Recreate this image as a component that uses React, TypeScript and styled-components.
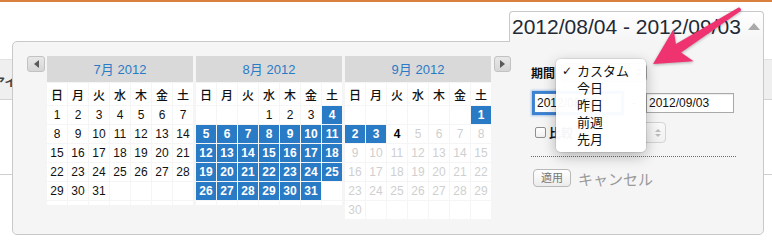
import React from "react";
import styled, { createGlobalStyle } from "styled-components";

const SANS = `"Liberation Sans", Arial, "Noto Sans CJK JP", sans-serif`;

const Global = createGlobalStyle`
  * { box-sizing: border-box; }
  html, body { margin: 0; padding: 0; background: #fff; }
  body { font-family: ${SANS}; color: #111; }
`;

const Page = styled.div`
  position: relative;
  width: 772px;
  height: 247px;
  overflow: hidden;
  background: #fff;
`;

const TopRule = styled.div`
  height: 2px;
  background: #d9803f;
`;

const HeaderSpace = styled.div`
  height: 57px;
`;

const TabBand = styled.div`
  height: 41px;
  background: #efefef;
  border-top: 1px solid #e2e2e2;
  border-bottom: 1px solid #d4d4d4;
  display: flex;
  align-items: center;
  padding-top: 4px;
`;

const BandLabel = styled.span`
  margin-left: -7px;
  font-size: 12px;
  font-weight: bold;
  color: #444;
`;

const ContentSpace = styled.div`
  height: 74px;
`;

const Rule = styled.div`
  height: 1px;
  background: #cfcfcf;
`;

/* ---------- overlay: date range picker ---------- */

const Panel = styled.div`
  position: absolute;
  left: 12px;
  top: 41px;
  width: 752px;
  height: 194px;
  border: 1px solid #c9c9c9;
  border-radius: 5px 0 5px 5px;
  background: #f5f5f5;
  padding: 14px;
  display: flex;
  align-items: flex-start;
  z-index: 1;
`;

const RangeBox = styled.div`
  position: absolute;
  left: 509px;
  top: 11px;
  width: 255px;
  height: 31px;
  border: 1px solid #c9c9c9;
  border-bottom: none;
  border-radius: 4px 4px 0 0;
  background: linear-gradient(#ffffff, #f7f7f7 80%, #f5f5f5);
  display: flex;
  z-index: 2;
`;

const RangeText = styled.div`
  flex: 1;
  padding-left: 2px;
  font-size: 21px;
  line-height: 29px;
  color: #1f2a35;
  white-space: nowrap;
`;

const RangeToggle = styled.div`
  width: 18px;
  display: flex;
  align-items: center;
  justify-content: center;
  padding-bottom: 1px;
  &::before {
    content: "";
    border-left: 6px solid transparent;
    border-right: 6px solid transparent;
    border-bottom: 7px solid #a9a9a9;
  }
`;

const NavButton = styled.div<{ $dir: "prev" | "next" }>`
  flex: none;
  width: ${(p) => (p.$dir === "prev" ? 18 : 17)}px;
  height: 16px;
  margin: ${(p) => (p.$dir === "prev" ? "0 2px 0 0" : "0 0 0 3px")};
  border: 1px solid #c2c2c2;
  border-radius: 3px;
  background: linear-gradient(#e8e8e8, #d6d6d6);
  display: flex;
  align-items: center;
  justify-content: center;
  &::before {
    content: "";
    border-top: 4px solid transparent;
    border-bottom: 4px solid transparent;
    ${(p) =>
      p.$dir === "prev"
        ? "border-right: 5px solid #5a5a5a;"
        : "border-left: 5px solid #5a5a5a;"}
  }
`;

const Months = styled.div`
  display: flex;
  gap: 3px;
`;

const Month = styled.div`
  display: grid;
  grid-template-columns: repeat(7, 20px);
  column-gap: 1px;
  row-gap: 1px;
  align-content: start;
`;

const MonthTitle = styled.div`
  grid-column: 1 / -1;
  height: 26px;
  background: #d9d9d9;
  color: #2a7bc6;
  font-size: 13px;
  display: flex;
  align-items: center;
  justify-content: center;
  padding-bottom: 1px;
`;

const Weekday = styled.div`
  height: 22px;
  background: #fff;
  font-size: 12px;
  font-weight: 500;
  color: #111;
  display: flex;
  align-items: center;
  justify-content: center;
`;

type Kind = "normal" | "selected" | "today" | "disabled" | "empty";

const dayColor: Record<Kind, string> = {
  normal: "#111",
  selected: "#fff",
  today: "#000",
  disabled: "#cfcfcf",
  empty: "#111",
};

const DayCell = styled.div<{ $kind: Kind }>`
  padding: 2px 0;
  line-height: 14px;
  font-size: 12px;
  text-align: center;
  background: ${(p) => (p.$kind === "selected" ? "#2a7bc6" : "#fff")};
  color: ${(p) => dayColor[p.$kind]};
  font-weight: ${(p) => (p.$kind === "selected" || p.$kind === "today" ? "bold" : "normal")};
`;

/* ---------- right-side form ---------- */

const Form = styled.div`
  position: relative;
  margin-left: 20px;
  padding-top: 6px;
  width: 215px;
`;

const Row = styled.div<{ $top?: number; $h: number }>`
  display: flex;
  align-items: center;
  height: ${(p) => p.$h}px;
  margin-top: ${(p) => p.$top ?? 0}px;
`;

const Label = styled.span`
  font-size: 12px;
  font-weight: bold;
  color: #111;
`;

const SelectBox = styled.div<{ $w: number; $ml: number; $disabled?: boolean }>`
  position: relative;
  width: ${(p) => p.$w}px;
  height: ${(p) => (p.$disabled ? 21 : 19)}px;
  margin-left: ${(p) => p.$ml}px;
  border: 1px solid #aaa;
  border-radius: 4px;
  background: linear-gradient(#fff, #ededed);
  opacity: ${(p) => (p.$disabled ? 0.45 : 1)};
`;

const UpDown = styled.span`
  position: absolute;
  right: 4px;
  top: 50%;
  transform: translateY(-50%);
  display: flex;
  flex-direction: column;
  gap: 2px;
  &::before,
  &::after {
    content: "";
    border-left: 3px solid transparent;
    border-right: 3px solid transparent;
  }
  &::before {
    border-bottom: 3px solid #777;
  }
  &::after {
    border-top: 3px solid #777;
  }
`;

const Field = styled.div<{ $focused?: boolean; $ml: number }>`
  width: 88px;
  height: 20px;
  margin-left: ${(p) => p.$ml}px;
  border: 1px solid ${(p) => (p.$focused ? "#4a87cf" : "#a9a9a9")};
  box-shadow: ${(p) =>
    p.$focused ? "0 0 0 2px #3a82d2, 0 0 2px 3px rgba(80,140,215,0.45)" : "inset 0 1px 1px rgba(0,0,0,0.08)"};
  background: #fff;
  font-size: 12px;
  line-height: 18px;
  padding-left: 2px;
  color: #111;
  overflow: hidden;
  white-space: nowrap;
`;

const Dash = styled.span`
  width: 24px;
  text-align: center;
  font-size: 12px;
  color: #333;
`;

const Checkbox = styled.span`
  width: 11px;
  height: 11px;
  margin-left: 4px;
  border: 1px solid #8f8f8f;
  border-radius: 2px;
  background: linear-gradient(#fff, #f0f0f0);
`;

const CheckLabel = styled(Label)`
  margin-left: 3px;
`;

const Divider = styled.div`
  margin-top: 13px;
  width: 205px;
  border-top: 1px dotted #6a6a6a;
`;

const ApplyButton = styled.div`
  width: 38px;
  height: 18px;
  margin-left: 2px;
  border: 1px solid #b9b9b9;
  border-radius: 4px;
  background: linear-gradient(#ffffff, #ececec);
  font-size: 11px;
  line-height: 16px;
  text-align: center;
  color: #777;
`;

const CancelLink = styled.span`
  margin-left: 7px;
  font-size: 15px;
  color: #9a9a9a;
`;

/* ---------- native popup menu ---------- */

const Menu = styled.div`
  position: absolute;
  left: 25px;
  top: 3px;
  width: 90px;
  padding: 4px 0;
  background: rgba(255, 255, 255, 0.96);
  border-radius: 5px;
  box-shadow: 0 4px 14px rgba(0, 0, 0, 0.28), 0 0 0 1px rgba(0, 0, 0, 0.07);
  z-index: 3;
`;

const MenuItem = styled.div<{ $checked?: boolean }>`
  position: relative;
  height: 17px;
  line-height: 17px;
  padding-left: 21px;
  font-size: 13px;
  color: #111;
  &::before {
    content: "${(p) => (p.$checked ? "✓" : "")}";
    position: absolute;
    left: 6px;
    top: 0;
    font-family: "DejaVu Sans", sans-serif;
    font-weight: bold;
    font-size: 12px;
  }
`;

const ArrowSvg = styled.svg`
  position: absolute;
  left: 640px;
  top: 0;
  width: 110px;
  height: 70px;
  z-index: 5;
  filter: drop-shadow(0 1px 1.5px rgba(0, 0, 0, 0.3));
`;

/* ---------- data ---------- */

interface Day {
  n?: number;
  kind: Kind;
}

function buildMonth(startDow: number, days: number, kindOf: (d: number) => Kind): Day[] {
  const cells: Day[] = [];
  for (let i = 0; i < startDow; i++) cells.push({ kind: "empty" });
  for (let d = 1; d <= days; d++) cells.push({ n: d, kind: kindOf(d) });
  while (cells.length < 42) cells.push({ kind: "empty" });
  return cells;
}

const WEEKDAYS = ["日", "月", "火", "水", "木", "金", "土"];

const MONTHS = [
  { title: "7月 2012", days: buildMonth(0, 31, () => "normal") },
  { title: "8月 2012", days: buildMonth(3, 31, (d) => (d >= 4 ? "selected" : "normal")) },
  {
    title: "9月 2012",
    days: buildMonth(6, 30, (d) => (d <= 3 ? "selected" : d === 4 ? "today" : "disabled")),
  },
];

const MENU = ["カスタム", "今日", "昨日", "前週", "先月"];

export default function App() {
  return (
    <Page>
      <Global />
      <TopRule />
      <HeaderSpace />
      <TabBand>
        <BandLabel>アイテム</BandLabel>
      </TabBand>
      <ContentSpace />
      <Rule />

      <RangeBox>
        <RangeText>2012/08/04 - 2012/09/03</RangeText>
        <RangeToggle />
      </RangeBox>

      <Panel>
        <NavButton $dir="prev" />
        <Months>
          {MONTHS.map((m) => (
            <Month key={m.title}>
              <MonthTitle>{m.title}</MonthTitle>
              {WEEKDAYS.map((w) => (
                <Weekday key={w}>{w}</Weekday>
              ))}
              {m.days.map((d, i) => (
                <DayCell key={i} $kind={d.kind}>
                  {d.n ?? ""}
                </DayCell>
              ))}
            </Month>
          ))}
        </Months>
        <NavButton $dir="next" />

        <Form>
          <Row $h={20}>
            <Label>期間</Label>
            <SelectBox $w={86} $ml={6}>
              <UpDown />
            </SelectBox>
          </Row>
          <Row $h={20} $top={11}>
            <Field $focused $ml={3}>2012/08/04</Field>
            <Dash>-</Dash>
            <Field $ml={0}>2012/09/03</Field>
          </Row>
          <Row $h={21} $top={9}>
            <Checkbox />
            <CheckLabel>比較</CheckLabel>
            <SelectBox $w={85} $ml={8} $disabled>
              <UpDown />
            </SelectBox>
          </Row>
          <Divider />
          <Row $h={18} $top={12}>
            <ApplyButton>適用</ApplyButton>
            <CancelLink>キャンセル</CancelLink>
          </Row>

          <Menu>
            {MENU.map((t, i) => (
              <MenuItem key={t} $checked={i === 0}>
                {t}
              </MenuItem>
            ))}
          </Menu>
        </Form>
      </Panel>

      <ArrowSvg viewBox="640 0 110 70">
        <path
          d="M738.6,7.6 L675.9,43.9 L673.6,28.9 L653,64 L693.6,61.3 L681.1,52.5 L740.6,11 A2.2,2.2 0 0 0 738.6,7.6 Z"
          fill="#ef3370"
        />
      </ArrowSvg>
    </Page>
  );
}
